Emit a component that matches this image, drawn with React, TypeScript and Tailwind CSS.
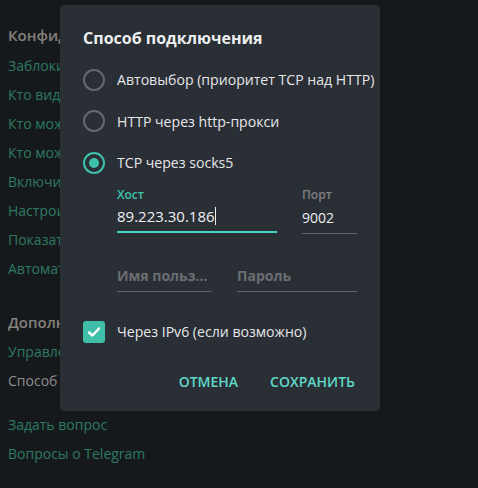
import React from "react";

const font = { fontFamily: '"Open Sans", "Noto Sans", sans-serif' };

const privacyLinks = [
  "Заблокированные пользователи",
  "Кто видит мой номер телефона",
  "Кто может видеть время захода",
  "Кто может звонить",
  "Включить пароль",
  "Настроить двухэтапную проверку",
  "Показать все сессии",
  "Автоматическое удаление",
];

const Radio = ({ checked }: { checked?: boolean }) => (
  <div
    className={
      checked
        ? "shrink-0 w-[22px] h-[22px] rounded-full border-2 border-[#3fc2ad] flex items-center justify-center"
        : "shrink-0 w-[22px] h-[22px] rounded-full border-2 border-[#66696e]"
    }
  >
    {checked && <div className="w-[10px] h-[10px] rounded-full bg-[#3fc2ad]" />}
  </div>
);

const Option = ({ label, checked }: { label: string; checked?: boolean }) => (
  <div className="h-[41.5px] flex items-center gap-[12px] whitespace-nowrap">
    <Radio checked={checked} />
    <span className="text-[14.1px] text-[#e6e7e9]">{label}</span>
  </div>
);

const App = () => {
  return (
    <div className="relative w-[478px] h-[488px] bg-[#16191c] overflow-hidden" style={font}>
      {/* settings list behind the dialog */}
      <div className="w-[60px] overflow-hidden pl-[8px] text-[14px] whitespace-nowrap">
        <div className="mt-[21px] h-[29px] flex items-center text-[15px] font-semibold text-[#85807d]">
          Конфиденциальность
        </div>
        <div className="mt-[1px]">
          {privacyLinks.map((t) => (
            <div key={t} className="h-[29px] flex items-center text-[#2d7a60]">
              {t}
            </div>
          ))}
        </div>
        <div className="mt-[25px] h-[29px] flex items-center text-[15px] font-semibold text-[#85807d]">
          Дополнительно
        </div>
        <div className="h-[29px] flex items-center text-[#2d7a60]">Управление данными</div>
        <div className="h-[29px] flex items-center text-[#8d8d8d]">Способ подключения</div>
      </div>
      <div className="pl-[8px] text-[14px] whitespace-nowrap">
        <div className="mt-[15px] h-[29px] flex items-center text-[#2d7a60]">Задать вопрос</div>
        <div className="h-[29px] flex items-center text-[#2d7a60]">Вопросы о Telegram</div>
      </div>

      {/* dialog */}
      <div className="absolute left-[60px] top-[5px] w-[320px] h-[406px] rounded-[4px] bg-[#2a2e35] pl-[23px] pr-[23px] pt-[22px]">
        <div className="h-[22px] leading-[22px] text-[16px] font-bold text-[#eceef0]">
          Способ подключения
        </div>
        <div className="mt-[10px]">
          <Option label="Автовыбор (приоритет TCP над HTTP)" />
          <Option label="HTTP через http-прокси" />
          <Option label="TCP через socks5" checked />
        </div>

        <div className="pl-[34px] mt-[3px] flex gap-[25px]">
          <div className="w-[160px]">
            <div className="h-[16px] leading-[16px] text-[12px] font-semibold text-[#40c4ae]">Хост</div>
            <div className="mt-[3px] h-[27px] flex items-center border-b-2 border-[#45d6c3] pb-[4px]">
              <span className="text-[15px] text-[#eef0f2]">89.223.30.186</span>
              <span className="w-[1px] h-[18px] bg-[#eef0f2]" />
            </div>
          </div>
          <div className="w-[55px]">
            <div className="h-[16px] leading-[16px] text-[12px] font-semibold text-[#7c7f84]">Порт</div>
            <div className="mt-[3px] h-[28px] flex items-center border-b border-[#5f6267] pb-[4px]">
              <span className="text-[14px] text-[#eef0f2]">9002</span>
            </div>
          </div>
        </div>

        <div className="pl-[34px] mt-[29px] flex gap-[25px] whitespace-nowrap">
          <div className="w-[95px] h-[29px] flex items-center border-b border-[#5f6267] pb-[3px] text-[14px] font-bold text-[#6b6e73]">
            Имя польз...
          </div>
          <div className="w-[120px] h-[29px] flex items-center border-b border-[#5f6267] pb-[3px] text-[14px] font-bold text-[#6b6e73]">
            Пароль
          </div>
        </div>

        <div className="mt-[29px] flex items-center gap-[12px]">
          <div className="w-[22px] h-[22px] rounded-[3px] bg-[#3fbfaa] flex items-center justify-center">
            <svg width="14" height="12" viewBox="0 0 14 12" fill="none">
              <path d="M2 6.5L5.5 9.5L12 2.5" stroke="#ffffff" strokeWidth="2.4" strokeLinecap="round" strokeLinejoin="round" />
            </svg>
          </div>
          <span className="text-[14.1px] text-[#e6e7e9]">Через IPv6 (если возможно)</span>
        </div>

        <div className="mt-[28px] flex justify-end gap-[32px] pr-[2px] text-[14px] font-semibold text-[#5fd9c9]">
          <span>ОТМЕНА</span>
          <span>СОХРАНИТЬ</span>
        </div>
      </div>
    </div>
  );
};

export default App;
